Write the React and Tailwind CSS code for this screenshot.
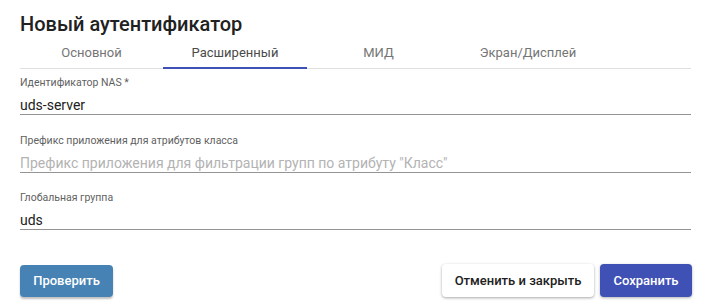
import React from "react";

const tabs = [
  { label: "Основной", w: "w-[143px]" },
  { label: "Расширенный", w: "w-[144px]", active: true },
  { label: "МИД", w: "w-[143px]" },
  { label: "Экран/Дисплей", w: "w-[156px]" },
];

const Field = ({ label, value, placeholder, className }) => (
  <div className={className}>
    <div className="text-[10.5px] leading-[12px] text-[#5f5f5f]">{label}</div>
    <div className="mt-[8px] h-[16px] text-[14px] leading-[16px] border-b border-[#949494] box-content pb-[1px]">
      {value ? (
        <span className="text-[#212121]">{value}</span>
      ) : (
        <span className="text-[#b3b3b3]">{placeholder}</span>
      )}
    </div>
  </div>
);

export default function App() {
  return (
    <div
      className="w-[709px] h-[307px] bg-white px-[20px] pt-[12px]"
      style={{ fontFamily: "Roboto, 'Liberation Sans', sans-serif" }}
    >
      <h1 className="text-[20px] leading-[24px] font-medium text-[#212121]">
        Новый аутентификатор
      </h1>
      <div className="mt-[2px] flex w-[671px] border-b border-[#e0e0e0] h-[31px]">
        {tabs.map((t) => (
          <div
            key={t.label}
            className={`${t.w} relative flex justify-center pt-[7px] text-[13px] leading-[16px] ${
              t.active ? "text-[#4a4a4a]" : "text-[#757575]"
            }`}
          >
            {t.label}
            {t.active && (
              <div className="absolute left-0 right-0 bottom-[-1px] h-[2px] bg-[#3f51b5]" />
            )}
          </div>
        ))}
      </div>
      <div className="w-[671px]">
        <Field className="mt-[8px]" label="Идентификатор NAS *" value="uds-server" />
        <Field
          className="mt-[20px]"
          label="Префикс приложения для атрибутов класса"
          placeholder='Префикс приложения для фильтрации групп по атрибуту "Класс"'
        />
        <Field className="mt-[19px]" label="Глобальная группа" value="uds" />
      </div>
      <div className="mt-[34px] flex w-[672px] items-center">
        <button className="h-[32px] w-[93px] rounded-[4px] bg-[#4682b4] text-white text-[13px] font-medium shadow-[0_2px_2px_rgba(0,0,0,0.25)]">
          Проверить
        </button>
        <div className="ml-auto flex gap-[6px]">
          <button className="h-[33px] w-[152px] rounded-[4px] bg-white text-[#212121] text-[13px] font-medium shadow-[0_1px_3px_rgba(0,0,0,0.35)]">
            Отменить и закрыть
          </button>
          <button className="h-[33px] w-[92px] rounded-[4px] bg-[#3f51b5] text-white text-[13px] font-medium shadow-[0_1px_3px_rgba(0,0,0,0.3)]">
            Сохранить
          </button>
        </div>
      </div>
    </div>
  );
}
